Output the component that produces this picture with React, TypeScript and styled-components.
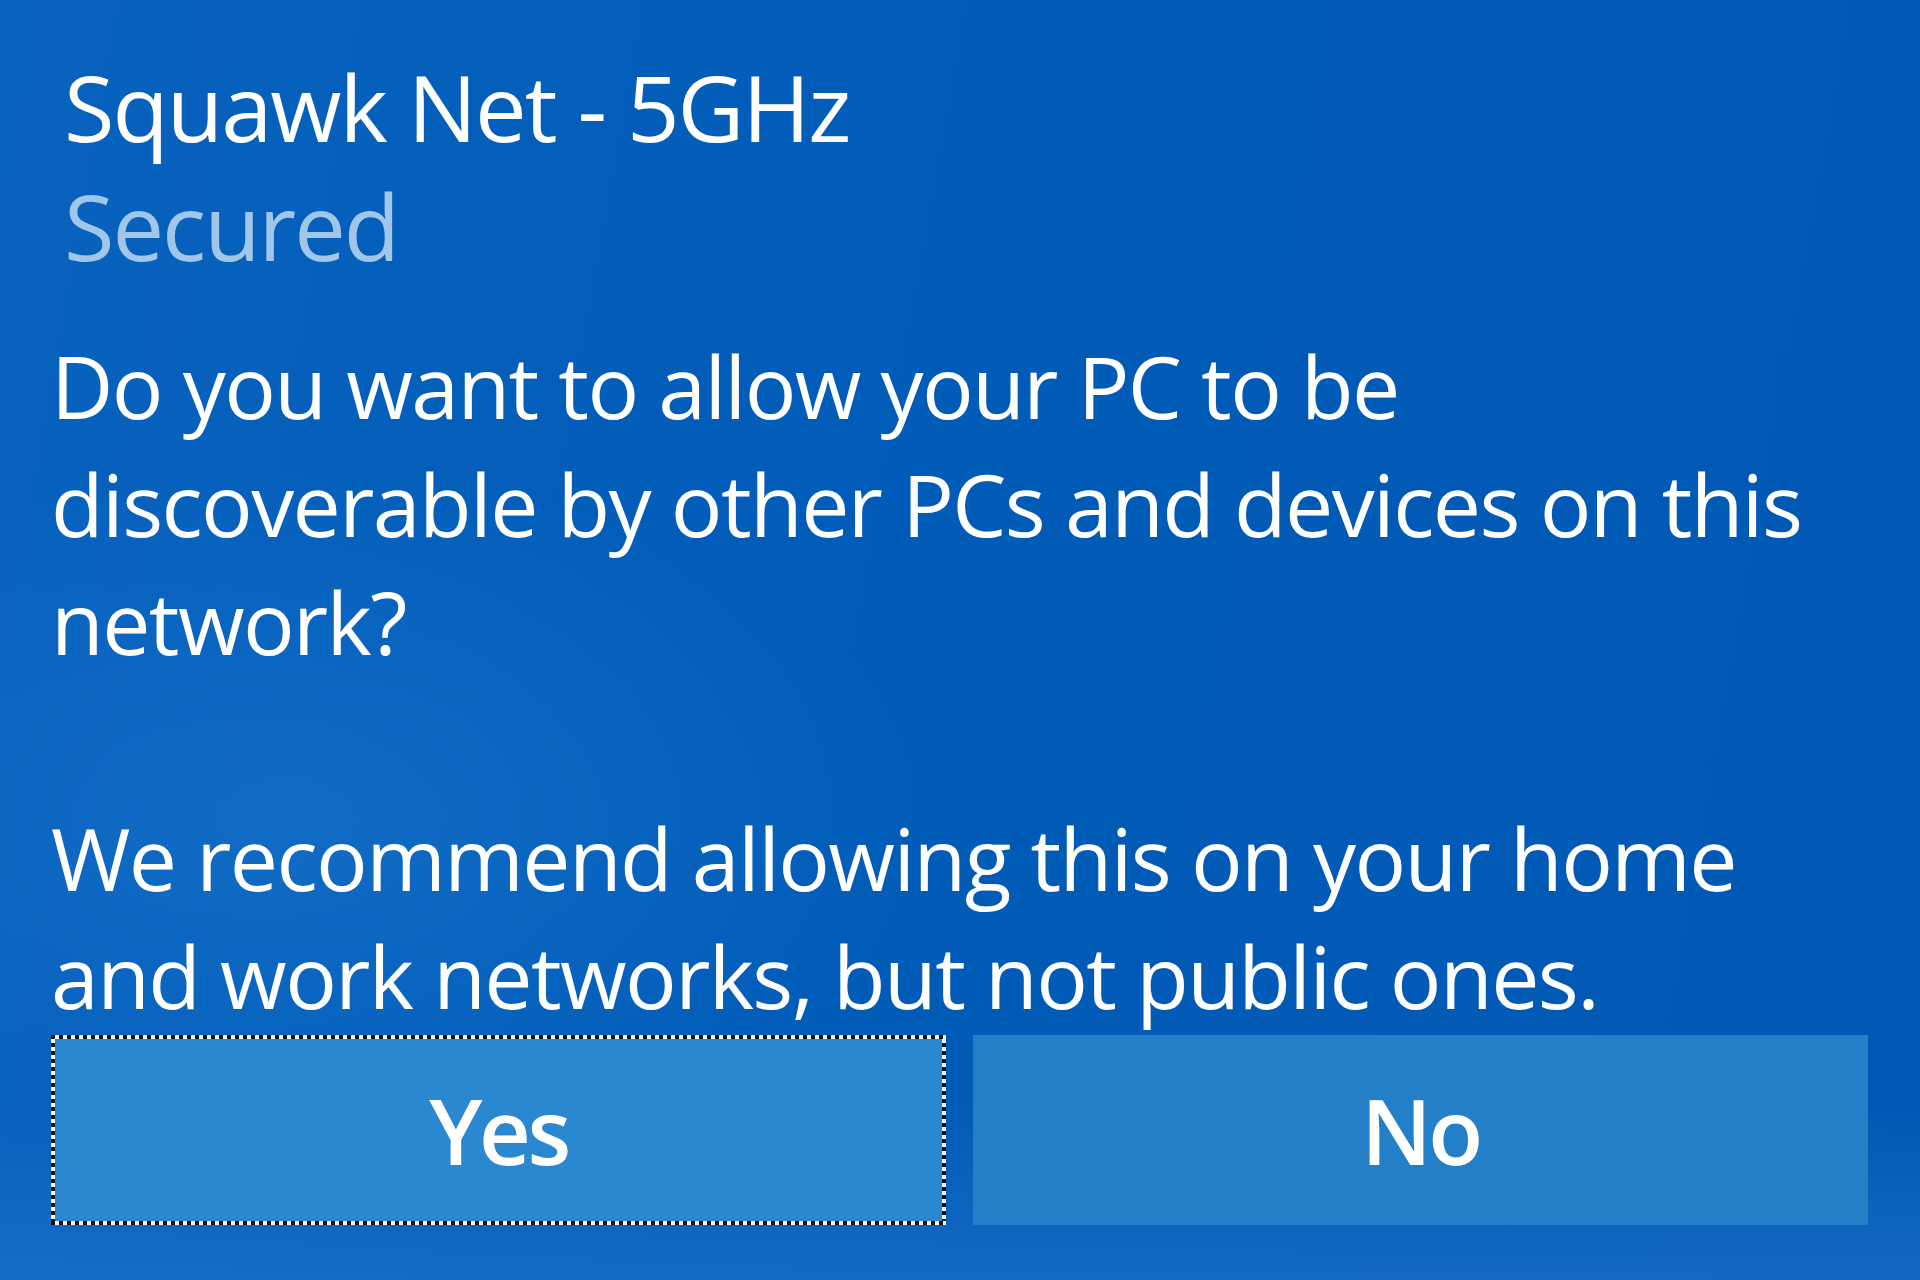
import React from "react";
import styled, { createGlobalStyle } from "styled-components";

const Global = createGlobalStyle`
  html, body { margin: 0; padding: 0; }
  body { background: #005ab6; }
  * { box-sizing: border-box; }
`;

const Flyout = styled.div`
  width: 1920px;
  height: 1280px;
  overflow: hidden;
  padding: 47px 52px 0 51px;
  display: flex;
  flex-direction: column;
  font-family: "Open Sans", "Noto Sans", sans-serif;
  color: #ffffff;
  background:
    radial-gradient(ellipse 900px 500px at 300px 820px, rgba(40, 130, 215, 0.35), rgba(40, 130, 215, 0) 70%),
    linear-gradient(180deg, rgba(0, 0, 0, 0) 0%, rgba(0, 0, 0, 0) 86%, rgba(40, 120, 205, 0.5) 100%),
    linear-gradient(100deg, #0862be 0%, #005cb8 45%, #0058b4 100%);
`;

const Header = styled.div`
  display: flex;
  flex-direction: column;
  padding-left: 13px;
`;

const NetworkName = styled.div`
  font-size: 92px;
  line-height: 119px;
  font-weight: 400;
  letter-spacing: -2px;
  white-space: nowrap;
`;

const Status = styled.div`
  font-size: 92px;
  line-height: 119px;
  font-weight: 400;
  letter-spacing: -2px;
  color: #a0c6ea;
`;

const Message = styled.p<{ $top: number }>`
  margin: ${(p) => p.$top}px 0 0 0;
  font-size: 86px;
  line-height: 118px;
  font-weight: 400;
  letter-spacing: -1.6px;
`;

const Buttons = styled.div`
  display: grid;
  grid-template-columns: 1fr 1fr;
  gap: 27px;
  margin-top: 0;
`;

const ActionButton = styled.button<{ $focused?: boolean }>`
  position: relative;
  height: 190px;
  border: none;
  outline: none;
  margin: 0;
  padding: 0;
  font-family: "Open Sans", "Noto Sans", sans-serif;
  font-size: 90px;
  font-weight: 600;
  letter-spacing: -3.5px;
  color: #ffffff;
  background: ${(p) => (p.$focused ? "#2a88d0" : "#2380c8")};
  display: flex;
  align-items: center;
  justify-content: center;

  &::after {
    content: "";
    position: absolute;
    inset: 0;
    pointer-events: none;
    display: ${(p) => (p.$focused ? "block" : "none")};
    background:
      repeating-linear-gradient(90deg, #151515 0 4px, #f4f4f4 4px 8px) top / 100% 4px no-repeat,
      repeating-linear-gradient(90deg, #151515 0 4px, #f4f4f4 4px 8px) bottom / 100% 4px no-repeat,
      repeating-linear-gradient(180deg, #151515 0 4px, #f4f4f4 4px 8px) left / 4px 100% no-repeat,
      repeating-linear-gradient(180deg, #151515 0 4px, #f4f4f4 4px 8px) right / 4px 100% no-repeat;
  }
`;

export default function App() {
  return (
    <>
      <Global />
      <Flyout>
        <Header>
          <NetworkName>Squawk Net - 5GHz</NetworkName>
          <Status>Secured</Status>
        </Header>
        <Message $top={42}>
          Do you want to allow your PC to be discoverable by other PCs and devices on this network?
        </Message>
        <Message $top={118}>
          We recommend allowing this on your home and work networks, but not public ones.
        </Message>
        <Buttons>
          <ActionButton $focused>Yes</ActionButton>
          <ActionButton>No</ActionButton>
        </Buttons>
      </Flyout>
    </>
  );
}
